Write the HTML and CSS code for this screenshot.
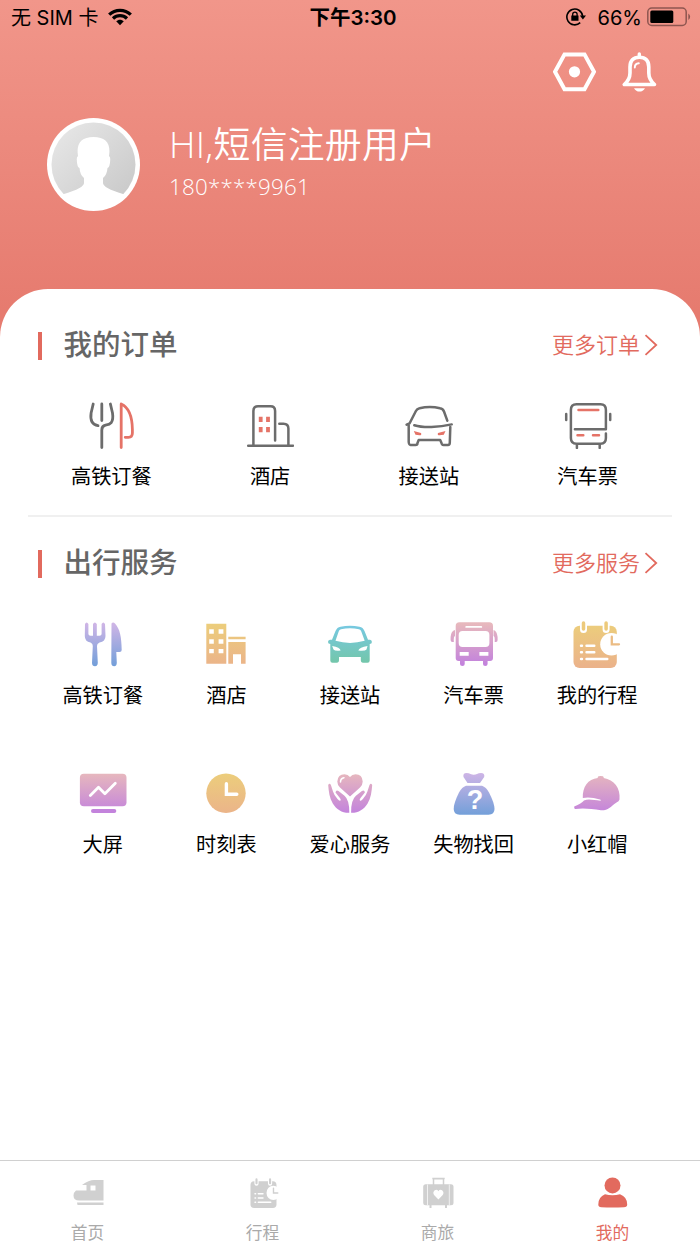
FILE: index.html
```html
<!DOCTYPE html>
<html lang="zh-CN">
<head>
<meta charset="utf-8">
<title>我的</title>
<link rel="stylesheet" href="styles.css">
</head>
<body>
<svg class="defs" aria-hidden="true">
  <defs>
    <linearGradient id="blue" gradientUnits="userSpaceOnUse" x1="0" y1="3" x2="0" y2="46"><stop offset="0" stop-color="#d0b5e6"/><stop offset="1" stop-color="#739fd9"/></linearGradient>
    <linearGradient id="gold" gradientUnits="userSpaceOnUse" x1="0" y1="3" x2="0" y2="46"><stop offset="0" stop-color="#ecce7b"/><stop offset="1" stop-color="#ebb38a"/></linearGradient>
    <linearGradient id="teal" gradientUnits="userSpaceOnUse" x1="0" y1="5" x2="0" y2="43"><stop offset="0" stop-color="#77c9e2"/><stop offset="1" stop-color="#73c6aa"/></linearGradient>
    <linearGradient id="pink" gradientUnits="userSpaceOnUse" x1="0" y1="4" x2="0" y2="44"><stop offset="0" stop-color="#e7b8bd"/><stop offset="1" stop-color="#c383dc"/></linearGradient>
    <linearGradient id="grey" x1="0" y1="0" x2="1" y2="1"><stop offset="0" stop-color="#e9e9e9"/><stop offset="1" stop-color="#c6c6c6"/></linearGradient>
    <clipPath id="face"><circle cx="46.5" cy="46.5" r="43.5"/></clipPath>
  </defs>
</svg>
<div class="screen">
  <header class="hero">
    <div class="status">
      <div class="status-left"><span>无 SIM 卡</span>
        <svg width="24" height="18" viewBox="0 0 24 18"><g fill="none" stroke="#000" stroke-width="3.2"><path d="M1.2 6.7C7.3.8 16.7.8 22.8 6.7"/><path d="M5 10.5C9 6.7 15 6.7 19 10.5"/></g><path d="M8.2 13.3C10.4 11.2 13.6 11.2 15.8 13.3L12 17.2Z"/></svg>
      </div>
      <div class="status-time">下午3:30</div>
      <div class="status-right">
        <svg width="20" height="18" viewBox="0 0 20 18"><path d="M14.2 14.7A7.9 7.9 0 1 1 16.6 8" fill="none" stroke="#000" stroke-width="1.6"/><path d="M13.8 7.5H20L16.9 11.4ZM5.3 7.5H12.5V12.8H5.3Z"/><path d="M6.7 8V6.3A2.2 2.2 0 0 1 11.1 6.3V8" fill="none" stroke="#000" stroke-width="1.3"/></svg>
        <span>66%</span>
        <svg width="44" height="20" viewBox="0 0 44 20"><rect x=".8" y="1" width="38.4" height="17.5" rx="4" fill="none" stroke="#8e5650" stroke-width="1.5"/><rect x="3.3" y="3.5" width="23" height="12.5" rx="1.5"/><path d="M41.3 6.5Q45 9.7 41.3 13Z" fill="#8e5650"/></svg>
      </div>
    </div>
    <div class="actions">
      <svg width="43" height="40" viewBox="0 0 43 40" fill="none" stroke="#fff"><path d="M11.5 2.4H31.5L41 19.8L31.5 37.2H11.5L2 19.8Z" stroke-width="4"/><circle cx="21.5" cy="19.8" r="5.6" fill="#fff" stroke="none"/></svg>
      <svg width="35" height="40" viewBox="0 0 35 40" fill="none" stroke="#fff" stroke-linecap="round" stroke-linejoin="round"><path d="M17.3 2V5" stroke-width="3.4"/><path d="M2.3 32.5H32.5Q26.8 27.5 26.8 21V15Q26.8 5.3 17.4 5.3Q8 5.3 8 15V21Q8 27.5 2.3 32.5Z" stroke-width="3.6"/><path d="M12.8 15.5Q12.8 11.5 16.8 11.2" stroke-width="1.9"/><path d="M12 36.2H23Q21 39.6 17.5 39.6Q14 39.6 12 36.2Z" fill="#fff" stroke="none"/></svg>
    </div>
    <div class="profile">
      <svg width="93" height="93" viewBox="0 0 93 93"><circle cx="46.5" cy="46.5" r="46.5" fill="#fff"/><circle cx="46.5" cy="46.5" r="42" fill="url(#grey)"/><path clip-path="url(#face)" d="M0 93V82L17 76Q37 70 37 65V60Q33 57 32.5 50Q30 49 29.8 42Q29.5 39 31 38Q28 19 46.5 19Q65 19 62 38Q63.5 39 63.2 42Q63 49 60.5 50Q60 57 56 60V65Q56 70 76 76L93 82V93Z" fill="#fff"/></svg>
      <div class="who"><div class="name">HI,短信注册用户</div><div class="phone">180****9961</div></div>
    </div>
  </header>
  <main class="sheet">
    <section class="orders">
      <div class="head"><h2>我的订单</h2><a class="more"><span>更多订单</span><svg width="14" height="22" viewBox="0 0 14 22"><path d="M1.5 1.2L12.2 11L1.5 20.8"/></svg></a></div>
      <div class="grid four">
        <div class="item"><svg class="line" viewBox="0 0 48 48"><path d="M6.2 3L4.1 12Q2.5 23.5 11 24.7M14.8 3V19.5M23.4 3L25.5 12C27 22 23 23.3 18.5 24.2Q14.8 25 14.8 29V46.5"/><path class="red" d="M34.2 46.5V3C42 6.5 45.2 16 45.4 28.5V32Q45.4 36.3 41.5 36.3H38.2"/></svg><span>高铁订餐</span></div>
        <div class="item"><svg class="line thin" viewBox="0 0 48 48"><path d="M2.2 44.7H47M7.4 44.7V10Q7.4 5.3 12 5.3H24.5Q29.1 5.3 29.1 10V39.5M33.3 22.7H37.5Q42.4 22.7 42.4 27.5V44.7"/><path class="redfill" d="M12.8 15.7H16.6V21H12.8ZM20.1 15.7H23.9V21H20.1ZM12.8 26H16.6V31.3H12.8ZM20.1 26H23.9V31.3H20.1Z"/></svg><span>酒店</span></div>
        <div class="item"><svg class="line thin" viewBox="0 0 48 48"><path d="M42.3 19.7L39 10.5Q38 7.8 35 7.3Q25 4.8 14.5 7.3Q12 7.8 10.9 10L4.5 22.5L1.6 23.6M9.3 24.2C18 27 34 26.5 46.7 23.4M3.7 24V41Q4 44 5.5 44H10.5Q12.5 44 12.5 42L13.7 39H35.2L36.5 42Q36.7 44 38.5 44H43Q44.8 44 44.8 41.5L45.3 26"/><path class="redfill" d="M8.8 30L16 32Q17 34.3 14.5 34.3L10.5 33.7ZM40.5 30L33 32Q32 34.3 34.5 34.3L38.8 33.7Z"/></svg><span>接送站</span></div>
        <div class="item"><svg class="line thin" viewBox="0 0 48 48"><path d="M10.9 28.3H41.9V9Q41.9 3.3 36.5 3.3H12.5Q6.9 3.3 6.9 9V37Q6.9 42.7 12.5 42.7H36.5Q41.9 42.7 41.9 37V32.5M2.2 13V19M46.2 13V19M12.9 43V47M35.7 43V47"/><path class="red" d="M14.5 9H34.3M13.5 34.3H19.3M29 34.3H35"/></svg><span>汽车票</span></div>
      </div>
    </section>
    <section class="services">
      <div class="head"><h2>出行服务</h2><a class="more"><span>更多服务</span><svg width="14" height="22" viewBox="0 0 14 22"><path d="M1.5 1.2L12.2 11L1.5 20.8"/></svg></a></div>
      <div class="grid five">
        <div class="item"><svg viewBox="0 0 48 48" fill="url(#blue)"><path d="M6 4Q7.7 .8 9.4 4V14Q9.5 15.8 11.5 15.8H14V4Q15.9 .8 17.8 4V15.8H20.5Q22.5 15.8 22.6 14V4Q24.3 .8 26 4L26.5 16Q26.5 21.5 20.5 22.5Q17.8 23.5 18 26L18.8 43Q18.5 46.3 16 46.3Q13.2 46.3 13 43L13.8 26Q14 23.5 11.5 22.5Q5.8 21.5 5.8 16Z"/><path d="M32.5 3.5Q34 1.5 36 3.5C41 9 42.5 17 42.7 30Q42.7 32 40.5 32H37.3L37.8 43Q37.5 46.3 35.2 46.3Q32.5 46.3 32.3 43Z"/></svg><span>高铁订餐</span></div>
        <div class="item"><svg viewBox="0 0 48 48" fill="url(#gold)"><path fill-rule="evenodd" d="M4.3 3.7H24.3V43.7H4.3ZM7.2 9.3V13.7H11.8V9.3ZM16.6 9.3V13.7H21.4V9.3ZM7.2 19.3V23.7H11.8V19.3ZM16.6 19.3V23.7H21.4V19.3ZM7.2 29V33.3H11.8V29ZM16.6 29V33.3H21.4V29ZM26.3 16.7H43.6V19.3H26.3ZM26.3 22H43.6V43.7H39V34.3H31V43.7H26.3Z"/></svg><span>酒店</span></div>
        <div class="item"><svg viewBox="0 0 48 48" fill="url(#teal)"><path fill-rule="evenodd" d="M2 22Q2 20.3 4 19.8H6L9.5 11Q11 7.3 14.5 6.7Q24 4.8 33.5 6.7Q37 7.3 38.5 11L42 19.8H44Q45.9 20.3 45.9 22Q45.9 24 43.7 24V40.5Q43.7 42.7 41.5 42.7H37Q34.8 42.7 34.8 40V37H13V40Q13 42.7 10.8 42.7H6.5Q4.3 42.7 4.3 40.5V24Q2 24 2 22ZM9.5 20.8Q24 25 38.7 20.8L35.3 11.5Q34.7 9.5 33 9.2Q24 7.5 15 9.2Q13.3 9.5 12.7 11.5ZM6.2 26L7.5 29.5Q9 31.3 14.6 30.5Q14 27 6.2 26ZM41.5 26Q33.5 27 32.3 30.5Q39 31.3 40.5 29.5Z"/></svg><span>接送站</span></div>
        <div class="item"><svg viewBox="0 0 48 48" fill="url(#pink)"><path fill-rule="evenodd" d="M5.7 6Q5.7 2.3 9.5 2.3H39.3Q43 2.3 43 6V38Q43 41 40 41H37.6V44Q37.6 46 35.3 46Q33 46 33 44V41H14.7V44Q14.7 46 12.4 46Q10 46 10 44V41H8.7Q5.7 41 5.7 38ZM16.3 6Q15.3 6 15.3 6.9Q15.3 7.8 16.3 7.8H31.2Q32.2 7.8 32.2 6.9Q32.2 6 31.2 6ZM12.5 11Q8.7 11 8.7 15V23Q8.7 27 12.5 27H35.5Q39.4 27 39.4 23V15Q39.4 11 35.5 11ZM9.7 32V35.7H18.7V32ZM29.4 32V35.7H38.4V32Z"/><path d="M5 10V16Q3.5 16 3.8 22H2.5Q.6 22 .6 20V17Q1 11 5 10ZM43.5 10V16Q45 16 44.7 22H46Q47.6 22 47.6 20V17Q47 11 43.5 10Z"/></svg><span>汽车票</span></div>
        <div class="item"><svg class="calendar gold" viewBox="0 0 48 48"><g id="calendar"><rect x=".5" y="5.7" width="43.3" height="42.3" rx="6"/><path d="M10.5 3V9.5M33.1 3V9.5" stroke="#fff" stroke-width="7" stroke-linecap="round"/><path class="rings" d="M10.5 3V9M33.1 3V9"/><circle cx="38.5" cy="24.2" r="11.3" fill="#fff"/><path d="M8 25.7H9M8 32.3H9M8 39H9M13.5 25.7H21.3M13.5 32.3H21.3M13.5 39H34.3" stroke="#fff" stroke-width="2.4" stroke-linecap="round"/><path class="hands" d="M38.8 16.7V24.3H46"/></g></svg><span>我的行程</span></div>
        <div class="item"><svg viewBox="0 0 48 48"><rect x=".9" y="4.7" width="46.6" height="32.5" rx="4" fill="url(#pink)"/><rect x="12" y="40" width="25.3" height="4" rx="2" fill="#c383dc"/><path class="white-line" d="M11.3 26.5L19.5 18.3L25.9 24.7L36.3 14.3"/></svg><span>大屏</span></div>
        <div class="item"><svg viewBox="0 0 48 48"><circle cx="24" cy="24.3" r="19.7" fill="url(#gold)"/><path d="M24.4 14.7V25.2H34.8" fill="none" stroke="#fff" stroke-width="3.4" stroke-linecap="round"/></svg><span>时刻表</span></div>
        <div class="item"><svg viewBox="0 0 48 48" fill="url(#pink)"><path d="M24 27.5L14 18.5Q11.3 16 11.3 12.5Q11.8 5.3 18.5 5.3Q22 5.3 24 8Q26 5.3 29.5 5.3Q36.3 5.3 36.7 12.5Q36.7 16 34 18.5Z"/><path d="M14.5 13Q14.5 9.3 18 8.7" fill="none" stroke="#fff" stroke-width="1.5" stroke-linecap="round"/><path id="palm" d="M2.2 16Q3.5 13.5 4.9 16L7 22.5Q8 26 11.5 30Q13.5 32.5 14.5 31.5Q15.3 30.7 13.5 28.5L9.5 23.5Q10 20.5 12.5 22L18.5 26.8Q23.5 31 23.3 43.8C16 44 10.5 40.5 6.8 34.5C3.5 29 2.7 22.5 2.2 16Z"/><use href="#palm" transform="translate(48.4 0) scale(-1 1)"/></svg><span>爱心服务</span></div>
        <div class="item"><svg viewBox="0 0 48 48" fill="url(#blue)"><path d="M17.5 14L13.5 8Q12.7 4 16.5 4Q19 4 20.5 5Q23.8 6.5 27 5Q28.5 4 31 4Q35 4 34.2 8L30 14Z"/><path d="M16 16.7H32Q36 18 39 23.5Q44.5 34 44.5 40Q44.5 45.7 38.5 45.7H9.7Q3.7 45.7 3.7 40Q3.7 34 9 23.5Q12 18 16 16.7Z"/><text class="question" x="25" y="40" text-anchor="middle">?</text></svg><span>失物找回</span></div>
        <div class="item"><svg viewBox="0 0 48 48" fill="url(#pink)"><path d="M24.7 9V8.2Q24.7 6.9 27.7 6.9Q30.7 6.9 30.7 8.2V9C41 10.5 47.7 19 46.5 30.5Q46 32.5 43.5 33.5C37 38 35.5 41.5 28 41.3C18 39.5 9 38.8 2.2 40Q.8 39.8 1.2 37.5Q8.5 34.5 11 31.5C16 29.5 21 31.5 27.5 31.7Q28.5 31 27 30.5Q17 27.5 9.8 29C9.3 18 15 10 24.7 9Z"/></svg><span>小红帽</span></div>
      </div>
    </section>
  </main>
  <nav class="tabs">
    <div class="tab"><svg viewBox="0 0 36 36"><path fill-rule="evenodd" d="M12 9Q19 4 24 4H33.5V24.5H9Q3.5 24.5 3.5 19.5Q3.5 16.5 6 14.5H16.5V9ZM20.5 9.5V14.5H25.5V9.5ZM7 26.5H33.5V29H7.5Z"/></svg><span>首页</span></div>
    <div class="tab"><svg class="calendar" viewBox="0 0 36 36"><use href="#calendar" transform="translate(5.2 1.5) scale(.6 .636)"/></svg><span>行程</span></div>
    <div class="tab"><svg viewBox="0 0 36 36"><path d="M13.5 9V2.8H23.5V9M12.3 2.6H24.7" fill="none" stroke="#d0d0d0" stroke-width="1.5"/><rect x="3.2" y="8.3" width="30.3" height="21" rx="2.5"/><path d="M7.5 8.5V29M29.3 8.5V29" stroke="#fff" stroke-width=".7"/><path d="M10.5 29V32M26 29V32" stroke="#d0d0d0" stroke-width="2"/><path d="M18.4 23.5L14.3 19.3Q12.2 16.5 14.7 14.3Q17 13 18.4 15.2Q19.8 13 22.1 14.3Q24.6 16.5 22.5 19.3Z" fill="#fff"/></svg><span>商旅</span></div>
    <div class="tab active"><svg viewBox="0 0 36 36"><circle cx="17.5" cy="9.4" r="8"/><path d="M10 18.3Q17.5 20.3 25 18.3Q32.2 21 32.2 28.5Q32.2 31.2 29 31.2Q17.5 32 6.3 31.2Q3.3 31.2 3.3 28.5Q3.3 21 10 18.3Z"/></svg><span>我的</span></div>
  </nav>
</div>
</body>
</html>
```

FILE: styles.css
```css
* { box-sizing: border-box; }
body { margin: 0; background: #fff; font-family: "Noto Sans CJK SC", sans-serif; color: #000; }
svg { display: block; flex: none; }
.defs { position: absolute; width: 0; height: 0; }
.screen { width: 700px; height: 1244px; display: flex; flex-direction: column; overflow: hidden; background: #fff; }

.hero { height: 340px; flex: none; background: linear-gradient(#f1968a 0, #e67b6f 310px); }
.status { height: 36px; display: grid; grid-template-columns: 1fr auto 1fr; align-items: center; padding: 0 9px 0 11px; font: 20px/36px Inter, "Noto Sans CJK SC", sans-serif; }
.status-left, .status-right { display: flex; align-items: center; }
.status-left { gap: 9px; }
.status-left svg, .status-right svg { margin-top: -2px; }
.status-time { font-weight: 600; font-size: 20.5px; padding-left: 4px; }
.status-right { justify-content: flex-end; gap: 6px; }
.status-right span { font-size: 20px; margin: 0 -1px 0 6px; }
.actions { display: flex; justify-content: flex-end; gap: 26px; padding: 16px 43px 0 0; height: 82px; }
.profile { display: flex; padding-left: 47px; gap: 29px; color: #fff; }
.who { padding-top: 2px; }
.name { font: 350 36.8px/48px "Open Sans", "Noto Sans CJK SC DemiLight", "Noto Sans CJK SC", sans-serif; letter-spacing: .3px; }
.phone { font: 350 22.3px/38px "Open Sans", sans-serif; letter-spacing: .25px; }

.sheet { margin-top: -51px; flex: 1; background: #fff; border-radius: 48px 48px 0 0; padding: 29px 28px 0; }
.head { height: 54px; display: flex; align-items: center; justify-content: space-between; padding: 0 14px 0 9.5px; }
h2 { margin: -4px 0 0; font-size: 28.5px; line-height: 40px; font-weight: 500; color: #666; display: flex; align-items: center; gap: 22px; }
h2::before { content: ""; width: 4px; height: 28px; background: #e26a5e; margin-top: 5px; }
.more { display: flex; align-items: center; gap: 4px; font: 350 22px/32px "Noto Sans CJK SC DemiLight", "Noto Sans CJK SC", sans-serif; color: #e26a5e; }
.more span { margin-top: -5px; }
.more svg { fill: none; stroke: #e26a5e; stroke-width: 1.8; }
.grid { display: grid; }
.item { display: flex; flex-direction: column; align-items: center; font-size: 20.2px; line-height: 30px; }
.item svg { width: 48px; height: 48px; margin-bottom: 12px; }
.orders { height: 198px; }
.four { grid-template-columns: repeat(4, 158.75px); padding: 29px 0 0 4px; }
.services { border-top: 2px solid #f0f0f0; padding-top: 19px; margin-top: -1px; }
.five { grid-template-columns: repeat(5, 123.6px); grid-auto-rows: 149px; padding: 30px 0 0 13px; }
.line { fill: none; stroke: #6c6c6c; stroke-width: 2.8; stroke-linecap: round; stroke-linejoin: round; }
.line.thin { stroke-width: 2.5; }
.red { stroke: #e57367; }
.redfill { fill: #e57367; stroke: none; }
.white-line { fill: none; stroke: #fff; stroke-width: 2.8; stroke-linecap: round; stroke-linejoin: round; }
.calendar { --ring: #d0d0d0; --hand: #d0d0d0; }
.calendar.gold { --ring: #edca7b; --hand: #ebbc84; fill: url(#gold); }
.rings, .hands { fill: none; stroke: var(--ring); stroke-width: 3.5; stroke-linecap: round; }
.hands { stroke: var(--hand); stroke-width: 2.3; }
.question { font: 700 27px "Liberation Sans", sans-serif; fill: #fff; }

.tabs { height: 84px; flex: none; display: grid; grid-template-columns: repeat(4, 1fr); border-top: 1px solid #d0d0d0; padding-top: 15px; background: #fff; }
.tab { display: flex; flex-direction: column; align-items: center; color: #aaa; fill: #d0d0d0; font-size: 16.7px; line-height: 24px; }
.tab svg { width: 36px; height: 36px; margin-bottom: 8px; }
.active { color: #e26a5e; fill: #e26a5e; }
```
